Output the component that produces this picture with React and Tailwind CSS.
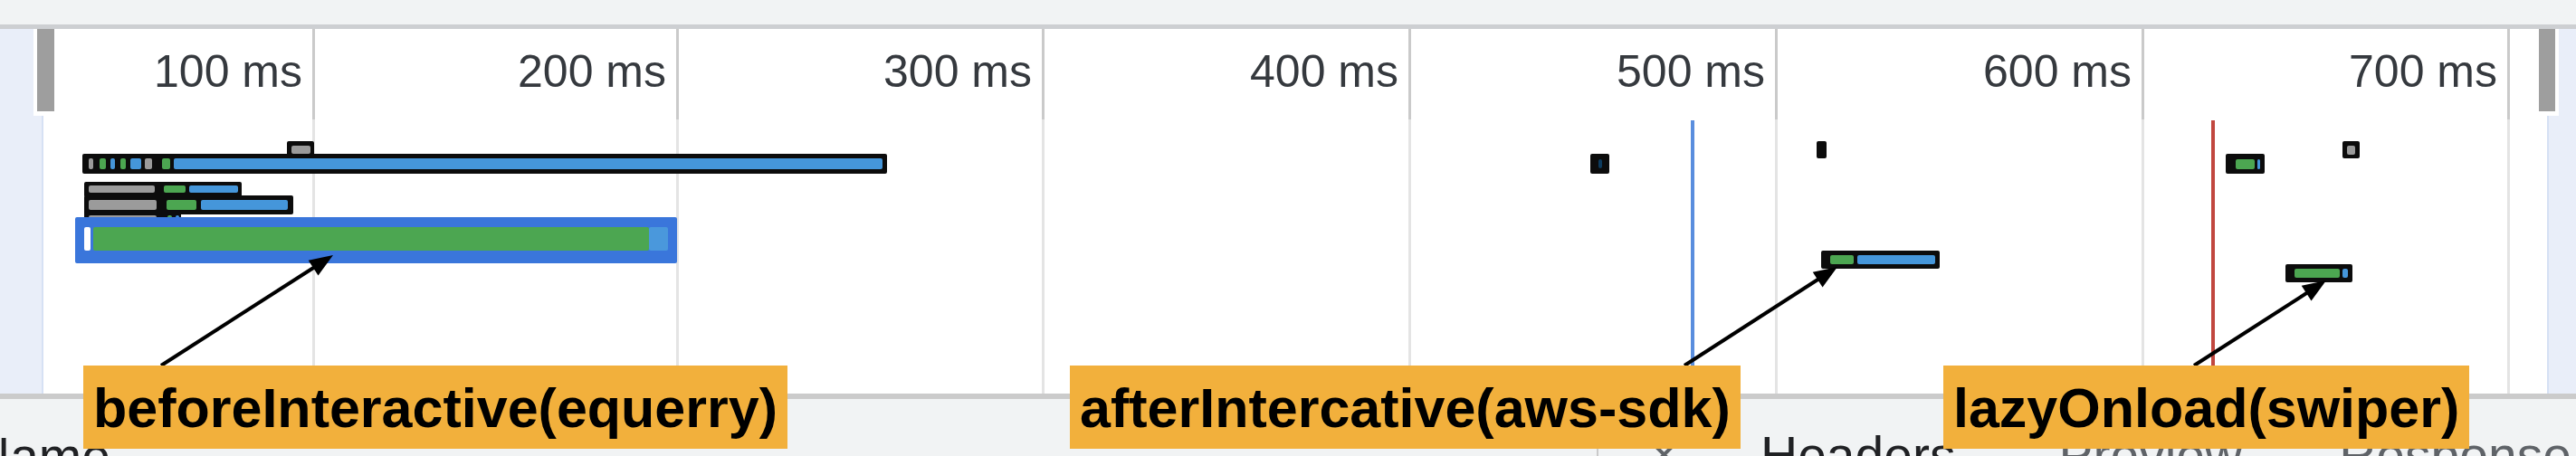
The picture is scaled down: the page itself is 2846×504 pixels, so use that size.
import React from "react";

const K = "#0c0c0c";
const GR = "#9b9b9b";
const GN = "#4ca651";
const BL = "#4596da";

const ROW_TOP = 32;

const GRID = [
  { x: 346, label: "100 ms" },
  { x: 748, label: "200 ms" },
  { x: 1152, label: "300 ms" },
  { x: 1557, label: "400 ms" },
  { x: 1962, label: "500 ms" },
  { x: 2367, label: "600 ms" },
  { x: 2771, label: "700 ms" },
];

// [x1, y1, x2, y2, colour] in page coordinates
const BLOCKS = [
  [317, 156, 347, 172, K],
  [322, 161, 343, 170, GR],
  [91, 170, 980, 192, K],
  [98, 175, 103, 187, GR],
  [110, 175, 117, 187, GN],
  [122, 175, 127, 187, BL],
  [133, 175, 139, 187, GN],
  [144, 175, 156, 187, BL],
  [160, 175, 168, 187, GR],
  [179, 175, 188, 187, GN],
  [192, 175, 975, 187, BL],

  [93, 201, 267, 218, K],
  [98, 205, 171, 213, GR],
  [181, 205, 205, 213, GN],
  [209, 205, 263, 213, BL],

  [93, 216, 324, 237, K],
  [98, 221, 173, 232, GR],
  [184, 221, 217, 232, GN],
  [222, 221, 318, 232, BL],

  [93, 233, 200, 246, K],
  [98, 238, 173, 246, GR],
  [185, 238, 190, 246, GN],
  [194, 238, 198, 246, BL],

  [83, 240, 748, 291, "#3a76db"],
  [93, 251, 100, 277, "#ffffff"],
  [103, 251, 717, 277, GN],
  [717, 251, 738, 277, "#4a98dc"],

  [1757, 170, 1778, 192, K],
  [1766, 176, 1770, 186, "#0d3b5e"],
  [2007, 156, 2018, 175, K],
  [2012, 277, 2143, 297, K],
  [2022, 282, 2048, 292, GN],
  [2052, 282, 2138, 292, BL],
  [2459, 170, 2502, 192, K],
  [2470, 176, 2491, 187, GN],
  [2494, 176, 2497, 187, BL],
  [2588, 156, 2607, 175, K],
  [2593, 161, 2602, 171, GR],
  [2525, 292, 2599, 312, K],
  [2535, 297, 2585, 307, GN],
  [2588, 297, 2594, 307, BL],
];

const ARROWS = [
  [178, 404, 368, 282],
  [1861, 404, 2030, 295],
  [2424, 404, 2570, 310],
];

const LABELS = [
  { x: 92, text: "beforeInteractive(equerry)" },
  { x: 1182, text: "afterIntercative(aws-sdk)" },
  { x: 2147, text: "lazyOnload(swiper)" },
];

function Arrow({ from }) {
  const [x1, y1, x2, y2] = from;
  const dx = x2 - x1;
  const dy = y2 - y1;
  const len = Math.sqrt(dx * dx + dy * dy);
  const ux = dx / len;
  const uy = dy / len;
  const head = 26;
  const hw = 10;
  const bx = x2 - ux * head;
  const by = y2 - uy * head;
  const pts = `${x2},${y2} ${bx - uy * hw},${by + ux * hw} ${bx + uy * hw},${by - ux * hw}`;
  return (
    <g>
      <line x1={x1} y1={y1} x2={bx + ux * 2} y2={by + uy * 2} stroke="#000" strokeWidth="4" />
      <polygon points={pts} fill="#000" />
    </g>
  );
}

function Timeline() {
  return (
    <div className="relative flex h-[403px] bg-white">
      <div className="w-[48px] bg-[#e9eef9] border-r-2 border-[#d6e1f4]" />
      <div className="flex-1" />
      <div className="w-[32px] bg-[#e9eef9] border-l-2 border-[#d6e1f4]" />

      {/* window handles */}
      <div className="absolute left-[37px] top-0 w-[23px] h-[96px] bg-white">
        <div className="ml-[4px] w-[19px] h-[91px] bg-[#9e9e9e]" />
      </div>
      <div className="absolute left-[2800px] top-0 w-[27px] h-[96px] bg-white">
        <div className="ml-[5px] w-[18px] h-[91px] bg-[#9e9e9e]" />
      </div>

      {GRID.map((g) => (
        <React.Fragment key={g.x}>
          <div
            className="absolute top-0 w-[3px] h-[100px] bg-[#cacaca]"
            style={{ left: g.x - 1 }}
          />
          <div
            className="absolute top-[100px] bottom-0 w-[3px] bg-[#e4e4e4]"
            style={{ left: g.x - 1 }}
          />
          <div
            className="absolute top-[22px] w-[200px] text-right text-[50px] leading-[50px] text-[#35393e]"
            style={{ left: g.x - 12 - 200 }}
          >
            {g.label}
          </div>
        </React.Fragment>
      ))}

      <div className="absolute left-[1868px] top-[101px] bottom-0 w-[4px] bg-[#5a8ede]" />
      <div className="absolute left-[2443px] top-[101px] bottom-0 w-[4px] bg-[#c1473f]" />

      {BLOCKS.map(([x1, y1, x2, y2, c], i) => (
        <div
          key={i}
          className="absolute rounded-[2px]"
          style={{
            left: x1,
            top: y1 - ROW_TOP,
            width: x2 - x1,
            height: y2 - y1,
            background: c,
          }}
        />
      ))}
    </div>
  );
}

function DetailTabs() {
  return (
    <div className="flex h-[63px] bg-[#f1f3f4] text-[57px] leading-[57px] overflow-hidden">
      <div className="w-[1764px] pt-[35px]">
        <span className="-ml-[30px] text-[#202124]">Name</span>
      </div>
      <div className="w-[2px] bg-[#cacaca]" />
      <div className="flex items-start pt-[34px]">
        <svg className="ml-[54px] mt-[9px] w-[37px] h-[37px]" viewBox="0 0 37 37">
          <path d="M4 4 L33 33 M33 4 L4 33" stroke="#5f6368" strokeWidth="4" />
        </svg>
        <span className="ml-[88px] text-[#202124]">Headers</span>
        <span className="ml-[114px] text-[#5f6368]">Preview</span>
        <span className="ml-[107px] text-[#5f6368]">Response</span>
      </div>
    </div>
  );
}

export default function App() {
  return (
    <div className="relative w-[2846px] h-[504px] overflow-hidden bg-white font-['Liberation_Sans',Arial,sans-serif]">
      <div className="h-[27px] bg-[#f1f3f4]" />
      <div className="h-[5px] bg-[#cdcfd2]" />
      <Timeline />
      <div className="h-[6px] bg-[#cbcbcb]" />
      <DetailTabs />

      {/* annotations */}
      <svg className="absolute inset-0 w-[2846px] h-[504px] pointer-events-none" viewBox="0 0 2846 504">
        {ARROWS.map((a, i) => (
          <Arrow key={i} from={a} />
        ))}
      </svg>
      {LABELS.map((l) => (
        <div
          key={l.text}
          className="absolute top-[404px] h-[92px] px-[11px] bg-[#f2b03c] text-black font-bold text-[61px] leading-[94px] whitespace-nowrap"
          style={{ left: l.x }}
        >
          {l.text}
        </div>
      ))}
    </div>
  );
}
